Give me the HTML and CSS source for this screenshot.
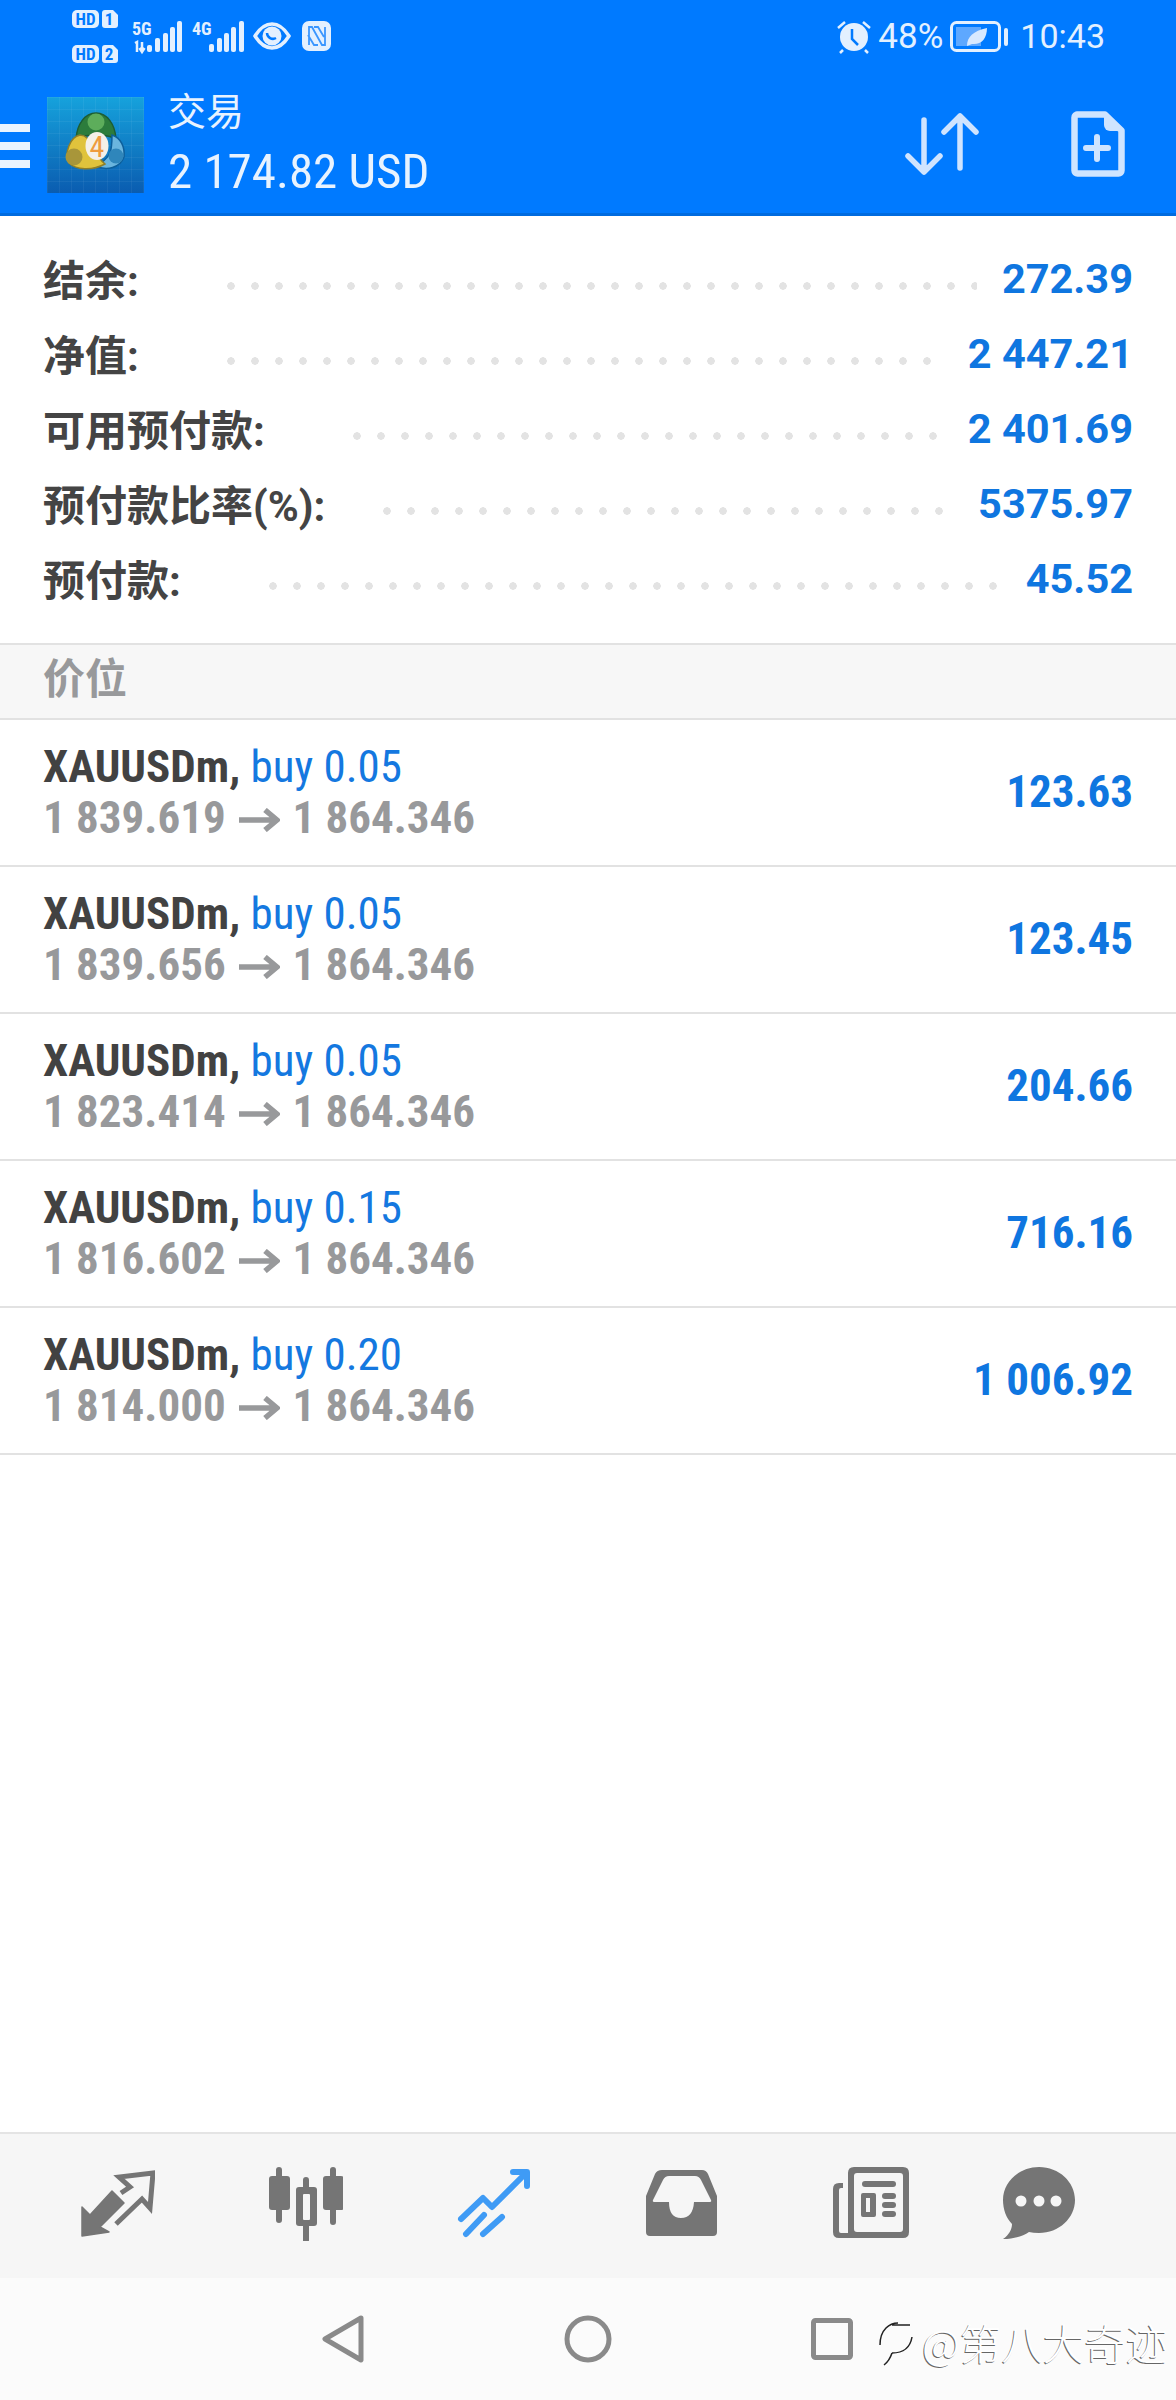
FILE: index.html
```html
<!DOCTYPE html>
<html lang="zh">

<head>
    <meta charset="UTF-8">
    <meta name="viewport" content="width=device-width, initial-scale=1.0">
    <title>交易</title>
    <link rel="stylesheet" href="styles.css">
</head>

<body>
    <header class="top">
        <div class="status flex-between">
            <div class="status-left flex">
                <svg class="st-sim" viewBox="0 0 47 72">
                    <rect x="0" y="10" width="27" height="18" rx="5" class="st-fill" />
                    <text x="13.5" y="25" class="st-cut">HD</text>
                    <path d="M33 10h8l5 5v10a3 3 0 0 1-3 3h-10a3 3 0 0 1-3-3v-12a3 3 0 0 1 3-3z" class="st-fill" />
                    <text x="37" y="25" class="st-cut">1</text>
                    <rect x="0" y="45" width="27" height="18" rx="5" class="st-fill" />
                    <text x="13.5" y="60" class="st-cut">HD</text>
                    <path d="M33 45h8l5 5v10a3 3 0 0 1-3 3h-10a3 3 0 0 1-3-3v-12a3 3 0 0 1 3-3z" class="st-fill" />
                    <text x="37" y="60" class="st-cut">2</text>
                </svg>
                <svg class="st-5g" viewBox="0 0 50 72">
                    <text x="0" y="35" class="st-net">5G</text>
                    <path d="M3 43l2-1v10M10 42v10M7.500 48l2.500 4l2.500-4" class="st-thin" />
                    <rect x="15" y="45" width="5" height="7" rx="2" class="st-fill" />
                    <rect x="23" y="38" width="5" height="14" rx="2" class="st-fill" />
                    <rect x="31" y="33" width="5" height="19" rx="2" class="st-fill" />
                    <rect x="38" y="27" width="5" height="25" rx="2" class="st-fill" />
                    <rect x="45" y="21" width="5" height="31" rx="2" class="st-fill" />
                </svg>
                <svg class="st-4g" viewBox="0 0 52 72">
                    <text x="0" y="35" class="st-net">4G</text>
                    <rect x="17" y="44" width="5" height="8" rx="2" class="st-fill" />
                    <rect x="25" y="38" width="5" height="14" rx="2" class="st-fill" />
                    <rect x="32" y="33" width="5" height="19" rx="2" class="st-fill" />
                    <rect x="39" y="27" width="5" height="25" rx="2" class="st-fill" />
                    <rect x="47" y="21" width="5" height="31" rx="2" class="st-fill" />
                </svg>
                <svg class="st-eye" viewBox="0 0 38 72">
                    <path d="M2 36c5-8 11-12 17-12s12 4 17 12c-5 8-11 12-17 12s-12-4-17-12z" fill="none" stroke="#e3f0ff" stroke-width="3.500" />
                    <circle cx="19" cy="36" r="9.500" class="st-fill" />
                    <path d="M14 33a6 6 0 0 0 9 5" fill="none" stroke="#007aff" stroke-width="2.500" />
                </svg>
                <svg class="st-nfc" viewBox="0 0 29 72">
                    <rect x="0" y="21" width="29" height="30" rx="7" class="st-fill" />
                    <path d="M7 45V27h3l10 18h3V27M12 27h4l6 10M6 35l6 10h4" fill="none" stroke="#3a96ff" stroke-width="1.800" />
                </svg>
            </div>
            <div class="status-right flex">
                <svg class="st-alarm" viewBox="0 0 34 72">
                    <circle cx="17" cy="37" r="14" class="st-fill" />
                    <path d="M1 28l7-6M33 28l-7-6M6 50l-3 3M28 50l3 3" class="st-thin" />
                    <path d="M15 29v10l6 6" fill="none" stroke="#007aff" stroke-width="2.500" />
                </svg>
                <span class="st-pct">48%</span>
                <svg class="st-batt" viewBox="0 0 58 72">
                    <rect x="1.500" y="22.500" width="48" height="28" rx="5" fill="none" stroke="#e3f0ff" stroke-width="3" />
                    <rect x="6" y="27" width="25" height="19" fill="#5ea8ff" />
                    <path d="M17 46c0-9 6-15 20-18c0 11-6 17-15 16z" fill="#d8e9ff" />
                    <rect x="54" y="28" width="4" height="18" rx="2" class="st-fill" />
                </svg>
                <span class="st-time">10:43</span>
            </div>
        </div>
        <div class="toolbar flex">
            <div class="burger"><i></i><i></i><i></i></div>
            <svg class="logo" viewBox="0 0 97 96">
                <defs>
                    <linearGradient id="logoBg" x1="0" y1="0" x2="0" y2="1">
                        <stop offset="0" stop-color="#16a2dc" />
                        <stop offset="1" stop-color="#0a5cb0" />
                    </linearGradient>
                    <pattern id="logoGrid" width="12" height="12" patternUnits="userSpaceOnUse">
                        <path d="M12 0H0V12" fill="none" stroke="#ffffff" stroke-opacity="0.1" />
                    </pattern>
                </defs>
                <rect width="97" height="96" fill="url(#logoBg)" />
                <rect width="97" height="96" fill="url(#logoGrid)" />
                <path d="M49 16c11 0 19 11 20 26c-7-4-13-5-20-2c-7-3-13-2-20 2c1-15 9-26 20-26z" fill="#2c7c3c" stroke="#1d5d33" stroke-width="1.500" />
                <circle cx="49" cy="25" r="8.500" fill="#5dad5b" />
                <path d="M65 38c9 3 13 12 12 22c-4 11-17 14-29 9c7-3 12-7 15-13c2-6 2-12 2-18z" fill="#6ab5de" stroke="#0d5f9b" stroke-width="1.500" />
                <circle cx="69" cy="59" r="7.500" fill="#2f86bb" />
                <path d="M33 38c6 0 11 6 15 14c2 6 5 11 10 15c-13 7-29 6-36-1c-5-10 1-26 11-28z" fill="#e0c33c" stroke="#8e7f2a" stroke-width="1.500" />
                <circle cx="27" cy="60" r="8.500" fill="#a8963a" />
                <ellipse cx="50" cy="49" rx="11.500" ry="14" fill="#f4f0e8" />
                <text x="50" y="60" class="logo-num">4</text>
            </svg>
            <div class="account">
                <div class="acc-title">交易</div>
                <div class="acc-balance">2 174.82 USD</div>
            </div>
            <div class="actions flex">
                <svg class="act-swap" viewBox="0 0 74 64">
                    <path d="M19 8v52M3 44l16 16l16-16" fill="none" stroke="#cfe4ff" stroke-width="5.500" stroke-linecap="round" stroke-linejoin="round" />
                    <path d="M55 4v52M39 20L55 4l16 16" fill="none" stroke="#cfe4ff" stroke-width="5.500" stroke-linecap="round" stroke-linejoin="round" />
                </svg>
                <svg class="act-doc" viewBox="0 0 54 66">
                    <path d="M6 3.500h28l16.500 16v40a3 3 0 0 1-3 3h-41a3 3 0 0 1-3-3v-53a3 3 0 0 1 3-3z" fill="none" stroke="#cfe4ff" stroke-width="6.500" stroke-linejoin="round" />
                    <path d="M33 3l18 17h-12a6 6 0 0 1-6-6z" fill="#cfe4ff" />
                    <path d="M26 26v22M15 37h22" stroke="#cfe4ff" stroke-width="6" stroke-linecap="round" />
                </svg>
            </div>
        </div>
    </header>

    <main class="content">
        <section class="summary">
            <div class="sum-row flex"><span class="sum-label">结余:</span><span class="dots"></span><span class="sum-value">272.39</span></div>
            <div class="sum-row flex"><span class="sum-label">净值:</span><span class="dots"></span><span class="sum-value">2 447.21</span></div>
            <div class="sum-row flex"><span class="sum-label">可用预付款:</span><span class="dots"></span><span class="sum-value">2 401.69</span></div>
            <div class="sum-row flex"><span class="sum-label">预付款比率(%):</span><span class="dots dots-tight"></span><span class="sum-value">5375.97</span></div>
            <div class="sum-row flex"><span class="sum-label">预付款:</span><span class="dots"></span><span class="sum-value">45.52</span></div>
        </section>

        <div class="section-head">价位</div>

        <div class="pos-row flex-between">
            <div class="pos-info">
                <div class="pos-line"><b>XAUUSDm,</b> <span class="pos-side">buy 0.05</span></div>
                <div class="pos-price">1 839.619 <svg class="pos-arrow" viewBox="0 0 41 24"><path d="M0 12h38M26 2l12 10l-12 10" /></svg> 1 864.346</div>
            </div>
            <div class="pos-profit">123.63</div>
        </div>
        <div class="pos-row flex-between">
            <div class="pos-info">
                <div class="pos-line"><b>XAUUSDm,</b> <span class="pos-side">buy 0.05</span></div>
                <div class="pos-price">1 839.656 <svg class="pos-arrow" viewBox="0 0 41 24"><path d="M0 12h38M26 2l12 10l-12 10" /></svg> 1 864.346</div>
            </div>
            <div class="pos-profit">123.45</div>
        </div>
        <div class="pos-row flex-between">
            <div class="pos-info">
                <div class="pos-line"><b>XAUUSDm,</b> <span class="pos-side">buy 0.05</span></div>
                <div class="pos-price">1 823.414 <svg class="pos-arrow" viewBox="0 0 41 24"><path d="M0 12h38M26 2l12 10l-12 10" /></svg> 1 864.346</div>
            </div>
            <div class="pos-profit">204.66</div>
        </div>
        <div class="pos-row flex-between">
            <div class="pos-info">
                <div class="pos-line"><b>XAUUSDm,</b> <span class="pos-side">buy 0.15</span></div>
                <div class="pos-price">1 816.602 <svg class="pos-arrow" viewBox="0 0 41 24"><path d="M0 12h38M26 2l12 10l-12 10" /></svg> 1 864.346</div>
            </div>
            <div class="pos-profit">716.16</div>
        </div>
        <div class="pos-row flex-between">
            <div class="pos-info">
                <div class="pos-line"><b>XAUUSDm,</b> <span class="pos-side">buy 0.20</span></div>
                <div class="pos-price">1 814.000 <svg class="pos-arrow" viewBox="0 0 41 24"><path d="M0 12h38M26 2l12 10l-12 10" /></svg> 1 864.346</div>
            </div>
            <div class="pos-profit">1 006.92</div>
        </div>
    </main>

    <nav class="tabs flex">
        <svg class="tab" viewBox="0 0 74 74">
            <path d="M1 69V40l8 8l22-24l12 12L19 60l9 5z" fill="#757575" stroke="#757575" stroke-width="1.500" stroke-linejoin="round" />
            <path d="M40 26l9-6L38 10l34-4l-3 35l-8-9L35 57" fill="none" stroke="#757575" stroke-width="5" />
        </svg>
        <svg class="tab" viewBox="0 0 74 74">
            <path d="M10 3v50M64 3v52M37 13v60" stroke="#757575" stroke-width="6" stroke-linecap="round" />
            <rect x="0" y="9" width="21" height="34" rx="3" fill="#757575" />
            <rect x="54" y="9" width="21" height="34" rx="3" fill="#757575" />
            <rect x="27" y="20" width="21" height="39" rx="3" fill="#757575" />
            <rect x="34" y="27" width="7" height="26" rx="1" fill="#f6f6f6" />
        </svg>
        <svg class="tab" viewBox="0 0 74 74">
            <path d="M4 52l22-21l9 9L69 6M56 5h14v14M27 48L9 67M45 50L26 67" fill="none" stroke="#3f9bf5" stroke-width="6" stroke-linecap="round" stroke-linejoin="round" />
        </svg>
        <svg class="tab" viewBox="0 0 74 74">
            <path fill-rule="evenodd" fill="#757575" d="M17 3h40q4 0 6 4l9 22v36q0 4-4 4H5q-4 0-4-4V29l9-22q2-4 7-4zM24 9q-4 0-6 4l-10 20q-1 2 2 2h14q0 16 12 16t13-16h15q3 0 2-2l-10-20q-2-4-6-4z" />
        </svg>
        <svg class="tab tab-wide" viewBox="0 0 76 74">
            <path fill-rule="evenodd" fill="#757575" d="M21 0h49q6 0 6 6v59q0 6-6 6H6q-6 0-6-6V22q0-6 6-6h4v5H8q-2 0-2 2v41q0 2 2 2h7V6q0-6 6-6zM24 6q-3 0-3 3v53q0 3 3 3h43q3 0 3-3V9q0-3-3-3z" />
            <rect x="29" y="14" width="34" height="6" rx="3" fill="#757575" />
            <path fill-rule="evenodd" fill="#757575" d="M30 26h11q2 0 2 2v20q0 2-2 2H30q-2 0-2-2V28q0-2 2-2zM33 31v14h4V31z" />
            <rect x="49" y="26" width="14" height="6" rx="3" fill="#757575" />
            <rect x="49" y="35" width="14" height="6" rx="3" fill="#757575" />
            <rect x="49" y="44" width="14" height="6" rx="3" fill="#757575" />
        </svg>
        <svg class="tab" viewBox="0 0 74 74">
            <path d="M37 0c20 0 36 15 36 33s-16 33-36 33q-6 0-10-1c-6 4-15 7-26 7c6-4 9-10 9-15C4 51 1 42 1 33C1 15 17 0 37 0z" fill="#757575" />
            <circle cx="19" cy="34" r="5.500" fill="#f6f6f6" />
            <circle cx="37" cy="34" r="5.500" fill="#f6f6f6" />
            <circle cx="54" cy="34" r="5.500" fill="#f6f6f6" />
        </svg>
    </nav>

    <div class="sysnav flex">
        <svg class="sys-back" viewBox="0 0 42 48">
            <path d="M39 3L3 24l36 21z" fill="none" stroke="#8a8a8a" stroke-width="5" stroke-linejoin="round" />
        </svg>
        <svg class="sys-home" viewBox="0 0 48 48">
            <circle cx="24" cy="24" r="21" fill="none" stroke="#8a8a8a" stroke-width="5" />
        </svg>
        <svg class="sys-square" viewBox="0 0 42 42">
            <rect x="2.500" y="2.500" width="37" height="37" rx="2" fill="none" stroke="#8a8a8a" stroke-width="5" />
        </svg>
        <div class="mark flex">
            <svg class="mark-icon" viewBox="0 0 36 50">
                <path d="M2 28C2 12 12 6 20 6M34 20C32 32 24 36 14 36M14 8h18M14 36c-2 6-4 9-8 12" fill="none" stroke="#222222" stroke-width="1.500" />
            </svg>
            <span class="mark-text">@第八大奇迹</span>
        </div>
    </div>
</body>

</html>
```

FILE: styles.css
```css
* {
    padding: 0;
    margin: 0;
    box-sizing: border-box;
}

body {
    width: 1176px;
    height: 2400px;
    display: flex;
    flex-direction: column;
    background-color: white;
    font-family: Roboto, "Noto Sans CJK SC", sans-serif;
    overflow: hidden;
}

svg {
    display: block;
    flex: none;
}

.flex {
    display: flex;
    align-items: center;
}

.flex-between {
    display: flex;
    justify-content: space-between;
    align-items: center;
}

/* header */
.top {
    height: 216px;
    background-color: #007aff;
    border-bottom: 3px solid #006bdf;
    color: #e8f3ff;
}

.status {
    height: 72px;
    padding: 0 71px 0 72px;
}

.status svg {
    height: 72px;
}

.st-fill {
    fill: #e3f0ff;
}

.st-thin {
    fill: none;
    stroke: #e3f0ff;
    stroke-width: 2.5;
}

.st-cut {
    fill: #007aff;
    font-size: 17px;
    font-weight: 700;
    font-stretch: 75%;
    text-anchor: middle;
}

.st-net {
    fill: #e3f0ff;
    font-size: 18px;
    font-weight: 700;
    font-stretch: 75%;
}

.st-sim { width: 47px; }
.st-5g { width: 50px; margin-left: 13px; }
.st-4g { width: 52px; margin-left: 10px; }
.st-eye { width: 38px; margin-left: 9px; }
.st-nfc { width: 29px; margin-left: 11px; }
.st-alarm { width: 34px; }
.st-batt { width: 58px; margin-left: 7px; }

.st-pct,
.st-time {
    color: #e3f0ff;
}

.st-pct {
    margin-left: 7px;
    font-size: 35px;
}

.st-time {
    margin-left: 12px;
    font-size: 34px;
}

.toolbar {
    height: 141px;
}

.burger {
    width: 30px;
    margin-top: 6px;
}

.burger i {
    display: block;
    height: 8px;
    margin-bottom: 10px;
    background-color: #eaf4ff;
}

.burger i:last-child {
    margin-bottom: 0;
}

.logo {
    width: 97px;
    height: 96px;
    margin-left: 17px;
    margin-top: 4px;
}

.logo-num {
    fill: #ee9c3e;
    font-size: 30px;
    font-stretch: 75%;
    text-anchor: middle;
}

.account {
    margin-left: 24px;
    flex: 1;
}

.acc-title {
    height: 50px;
    line-height: 50px;
    font-size: 38px;
    font-family: "Noto Sans CJK SC", sans-serif;
}

.acc-balance {
    height: 60px;
    margin-top: 8px;
    line-height: 60px;
    font-size: 49px;
    font-stretch: 75%;
}

.actions {
    gap: 92px;
    padding-right: 51px;
    margin-top: 2px;
}

.act-swap {
    width: 74px;
    height: 64px;
}

.act-doc {
    width: 54px;
    height: 66px;
}

/* balance block */
.content {
    flex: 1;
}

.summary {
    padding: 25px 43px 27px;
}

.sum-row {
    height: 75px;
}

.sum-label {
    margin-bottom: 2px;
    font-size: 42px;
    font-weight: 700;
    color: #444;
}

.sum-value {
    font-size: 41.5px;
    font-weight: 700;
    color: #0f76e0;
}

.dots {
    flex: 1;
    height: 8px;
    margin: 15px 25px 0 88px;
    background: radial-gradient(circle at 4px 4px, #e3e3e3 3.5px, transparent 4px) left top / 24px 8px repeat-x;
}

.dots-tight {
    margin-left: 58px;
}

.section-head {
    height: 77px;
    padding-left: 43px;
    line-height: 70px;
    background-color: #f7f7f7;
    border-top: 2px solid #e2e2e2;
    border-bottom: 2px solid #e2e2e2;
    font-size: 42px;
    font-weight: 700;
    color: #98999b;
}

/* positions */
.pos-row {
    height: 147px;
    padding: 0 43px;
    border-bottom: 2px solid #e2e2e2;
    font-stretch: 75%;
}

.pos-info {
    margin-bottom: 2px;
}

.pos-line,
.pos-price {
    height: 51px;
    line-height: 51px;
    font-size: 45px;
}

.pos-line b {
    color: #424242;
}

.pos-side {
    color: #1478e0;
}

.pos-price {
    font-weight: 700;
    color: #98999b;
}

.pos-arrow {
    display: inline-block;
    width: 41px;
    height: 24px;
    margin: 0 2px 0 3px;
    vertical-align: 1px;
    fill: none;
    stroke: #98999b;
    stroke-width: 5.5;
}

.pos-profit {
    margin-bottom: 2px;
    font-size: 45px;
    font-weight: 700;
    color: #0f76e0;
}

/* bottom tabs */
.tabs {
    height: 146px;
    gap: 114px;
    padding: 0 0 4px 81px;
    background-color: #f6f6f6;
    border-top: 2px solid #e4e4e4;
}

.tab {
    width: 74px;
    height: 74px;
}

.tab-wide {
    width: 76px;
}

.tab:last-child {
    margin-left: -21px;
}

.sysnav {
    position: relative;
    height: 122px;
    padding-left: 322px;
    background-color: #fbfbfb;
}

.sys-back { width: 42px; height: 48px; }
.sys-home { width: 48px; height: 48px; margin-left: 200px; }
.sys-square { width: 42px; height: 42px; margin-left: 199px; }

.mark {
    position: absolute;
    left: 878px;
    top: 34px;
}

.mark-icon {
    width: 36px;
    height: 50px;
}

.mark-text {
    margin-left: 8px;
    font-size: 41.5px;
    font-family: "Noto Sans CJK SC", sans-serif;
    font-weight: 300;
    color: #fff;
    text-shadow: -1px 1px 0 #666;
}
```
